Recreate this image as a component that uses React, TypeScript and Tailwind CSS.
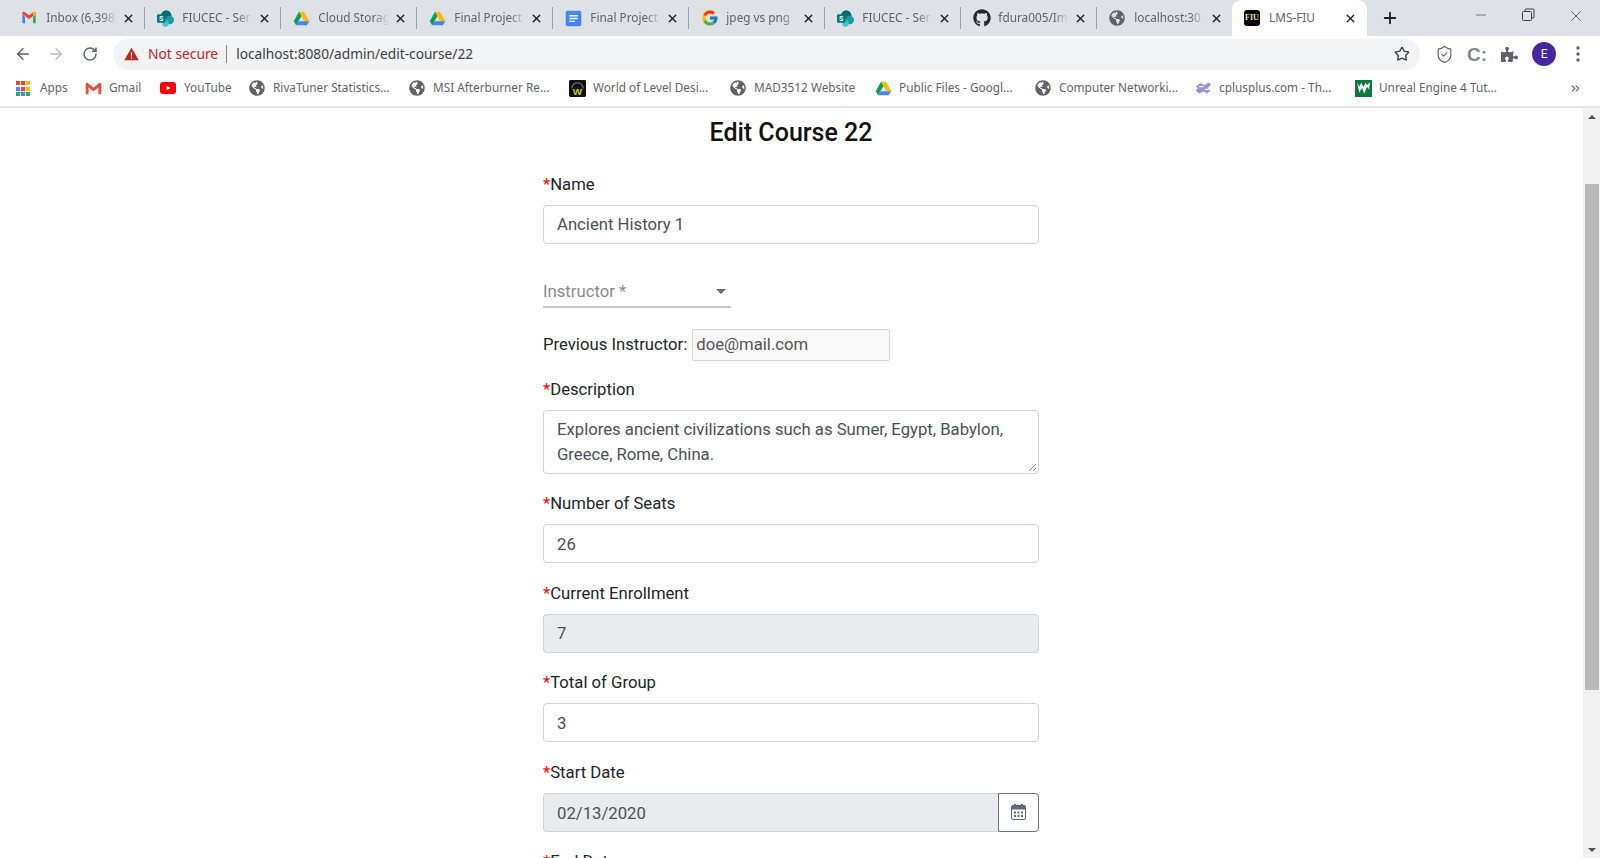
import React from "react";
import { ArrowLeft, ArrowRight, RotateCw, Star, ShieldCheck, X, Plus, Minus, ChevronsRight } from "lucide-react";
import { FaGithub, FaGlobeAmericas, FaPuzzlePiece } from "react-icons/fa";
import { FcGoogle } from "react-icons/fc";

const Gmail = ({ s = 16 }: { s?: number }) => (
  <svg width={s} height={s} viewBox="0 0 24 24">
    <path d="M2 6v14h4V10z" fill="#4285f4" />
    <path d="M22 6v14h-4V10z" fill="#34a853" />
    <path d="M2 6l10 7.500L22 6v-1.500a2 2 0 0 0-3.200-1.600L12 8 5.200 2.900A2 2 0 0 0 2 4.500z" fill="#ea4335" />
    <path d="M18 10l4-4V4.500a2 2 0 0 0-3.200-1.600L18 3.500z" fill="#fbbc04" />
  </svg>
);
const GmailBookmark = () => (
  <svg width={17} height={17} viewBox="0 0 24 24">
    <path d="M3 6h18v14H3z" fill="#f3f3f3" />
    <path d="M1 5v15h4V10.500l7 5.500 7-5.500V20h4V5l-2-1.500L12 11 3 3.500z" fill="#e0503f" />
  </svg>
);
const Drive = ({ s = 17 }: { s?: number }) => (
  <svg width={s} height={s} viewBox="0 0 24 24">
    <path d="M8.500 2.500h7L23 16h-7z" fill="#fbbc04" />
    <path d="M8.500 2.500L1 16l3.500 5.500L12 8.500z" fill="#0f9d58" />
    <path d="M8 16h15l-3.500 5.500h-15z" fill="#4285f4" />
  </svg>
);
const SharePoint = () => (
  <svg width={17} height={17} viewBox="0 0 24 24">
    <circle cx="13" cy="8" r="7.500" fill="#036c70" />
    <circle cx="18" cy="14" r="6" fill="#1a9ba1" />
    <circle cx="12" cy="19" r="4.500" fill="#37c6d0" />
    <rect x="0" y="6" width="12" height="12" rx="1.500" fill="#03787c" />
    <text x="6" y="15.500" textAnchor="middle" fontSize="10" fontWeight="700" fill="#fff" fontFamily="Roboto, sans-serif">S</text>
  </svg>
);
const Docs = () => (
  <svg width={17} height={17} viewBox="0 0 24 24">
    <rect x="1" y="1" width="22" height="22" rx="2.500" fill="#4285f4" />
    <path d="M6 7h12v2H6zM6 11h12v2H6zM6 15h8v2H6z" fill="#fff" />
  </svg>
);
const Fiu = () => (
  <div className="flex h-[16px] w-[16px] items-center justify-center rounded-[3px] bg-black font-['Liberation_Serif',serif] text-[8px] font-bold leading-none text-[#f5e6b0]">FIU</div>
);
const Globe = ({ s = 16 }: { s?: number }) => <FaGlobeAmericas size={s} color="#5f6368" />;
const AppsIcon = () => {
  const colors = ["#ea4335", "#ea4335", "#fbbc04", "#4285f4", "#ea4335", "#fbbc04", "#34a853", "#4285f4", "#34a853"];
  return (
    <div className="grid h-[14px] w-[14px] grid-cols-3 gap-[1.500px]">
      {colors.map((c, i) => (
        <svg key={i} width="4" height="4"><rect width="4" height="4" fill={c} /></svg>
      ))}
    </div>
  );
};
const Warning = () => (
  <svg width={15} height={14} viewBox="0 0 24 22">
    <path d="M12 1L23.500 21H.500z" fill="#c5221f" />
    <path d="M11 8h2v7h-2zM11 16.500h2v2h-2z" fill="#fff" />
  </svg>
);
const WorldIcon = () => (
  <svg width={17} height={17} viewBox="0 0 24 24">
    <rect width="24" height="24" rx="2" fill="#111" />
    <path d="M4 12a8 8 0 0 1 16 0" fill="none" stroke="#777" strokeWidth="1.500" />
    <text x="12" y="21" textAnchor="middle" fontSize="14" fontWeight="700" fill="#c6d410" fontFamily="Liberation Sans, sans-serif">W</text>
  </svg>
);
const CppIcon = () => (
  <svg width={17} height={14} viewBox="0 0 24 20">
    <path d="M1 8l7-5 5 3 7-4 3 3-5 5 4 4-5 4-5-3-6 3-5-4 3-4z" fill="#9a93d8" />
    <path d="M6 8h6M14 12h6" stroke="#fff" strokeWidth="2" />
  </svg>
);
const UnrealIcon = () => (
  <svg width={17} height={17} viewBox="0 0 24 24">
    <rect width="24" height="24" fill="#0c7a3a" />
    <path d="M0 0h5l3 12 4-7 3 9 4-9 5 6V0z" fill="#fff" opacity="0" />
    <path d="M3 3l3 15 4-7 3 8 4-9 3 3 1-10-4 4-2-3-3 6-3-6-3 5z" fill="#fff" />
  </svg>
);
const Calendar = () => (
  <svg width={15} height={16} viewBox="0 0 15 16">
    <path d="M3 0h2v3H3zM10 0h2v3h-2z" fill="#5f6b75" />
    <rect x="0.500" y="1.500" width="14" height="14" rx="1.500" fill="none" stroke="#5f6b75" />
    <rect x="0.500" y="1.500" width="14" height="4" fill="#5f6b75" />
    <path d="M3 7.500h2v2H3zM6.500 7.500h2v2h-2zM10 7.500h2v2h-2zM3 11h2v2H3zM6.500 11h2v2h-2zM10 11h2v2h-2z" fill="#5f6b75" />
  </svg>
);

const tabs = [
  { title: "Inbox (6,398)", icon: <Gmail /> },
  { title: "FIUCEC - Ser", icon: <SharePoint /> },
  { title: "Cloud Storag", icon: <Drive /> },
  { title: "Final Project", icon: <Drive /> },
  { title: "Final Project", icon: <Docs /> },
  { title: "jpeg vs png", icon: <FcGoogle size={18} /> },
  { title: "FIUCEC - Ser", icon: <SharePoint /> },
  { title: "fdura005/Im", icon: <FaGithub size={18} color="#24292e" /> },
  { title: "localhost:30", icon: <Globe /> },
];

const bookmarks = [
  { label: "Apps", icon: <AppsIcon />, w: "w-[69px]" },
  { label: "Gmail", icon: <GmailBookmark />, w: "w-[75px]" },
  { label: "YouTube", icon: <svg width={16} height={12} viewBox="0 0 16 12"><rect width="16" height="12" rx="3" fill="#f00" /><path d="M6.500 3.500v5l4-2.500z" fill="#fff" /></svg>, w: "w-[89px]" },
  { label: "RivaTuner Statistics...", icon: <Globe />, w: "w-[160px]" },
  { label: "MSI Afterburner Re...", icon: <Globe />, w: "w-[160px]" },
  { label: "World of Level Desi...", icon: <WorldIcon />, w: "w-[161px]" },
  { label: "MAD3512 Website", icon: <Globe />, w: "w-[145px]" },
  { label: "Public Files - Googl...", icon: <Drive />, w: "w-[160px]" },
  { label: "Computer Networki...", icon: <Globe />, w: "w-[160px]" },
  { label: "cplusplus.com - Th...", icon: <CppIcon />, w: "w-[160px]" },
  { label: "Unreal Engine 4 Tut...", icon: <UnrealIcon />, w: "w-[160px]" },
];

const Label = ({ text, gap = "mb-[8px]" }: { text: string; gap?: string }) => (
  <div className={`${gap} h-[24px] text-[16.700px] leading-[24px] text-[#212529]`}>
    <span className="text-[#ff0000]">*</span>
    {text}
  </div>
);

const Field = ({ label, value, disabled }: { label: string; value: string; disabled?: boolean }) => (
  <div className="mb-[18.500px]">
    <Label text={label} />
    <div className={`flex h-[39px] items-center rounded-[4px] border border-[#ced4da] px-[13px] pt-[2px] text-[16.700px] text-[#495057] ${disabled ? "bg-[#e9ecef]" : "bg-white"}`}>
      {value}
    </div>
  </div>
);

export default function App() {
  return (
    <div className="flex h-[858px] w-[1600px] flex-col overflow-hidden bg-white font-['Roboto',sans-serif]">
      {/* Tab strip */}
      <div className="flex h-[36px] shrink-0 items-stretch bg-[#dee1e6] pl-[9px] font-['Noto_Sans',sans-serif] text-[11.800px] text-[#5f6368]">
        {tabs.map((t, i) => (
          <div key={i} className="flex h-[36px] w-[136px] shrink-0 items-center justify-between pl-[12px]">
            <div className="flex w-[25px] shrink-0 items-center">{t.icon}</div>
            <div className="w-[71px] overflow-hidden whitespace-nowrap [mask-image:linear-gradient(to_right,black_78%,transparent)]">{t.title}</div>
            <X size={13} strokeWidth={2.600} className="ml-[4px] shrink-0 text-[#202124]" />
            <div className="ml-[9px] h-[22px] w-px shrink-0 bg-[#9aa0a6]" />
          </div>
        ))}
        <div className="-ml-[1px] flex h-[36px] w-[135px] shrink-0 items-center rounded-t-[9px] bg-white pl-[12px] pr-[10px]">
          <div className="flex w-[25px] shrink-0 items-center"><Fiu /></div>
          <div className="flex-1 whitespace-nowrap text-[#5f6368]">LMS-FIU</div>
          <X size={13} strokeWidth={2.600} className="text-[#202124]" />
        </div>
        <div className="ml-[14px] flex items-center"><Plus size={18} strokeWidth={2.400} className="text-[#202124]" /></div>
        <div className="ml-[74px] flex items-start pt-[7px] text-[#3c4043]">
          <Minus size={16} strokeWidth={1} />
          <svg width="16" height="16" viewBox="0 0 16 16" className="ml-[31px]" fill="none" stroke="#3c4043"><rect x="2.500" y="4.500" width="9" height="9" rx="1" /><path d="M5 4.500V3a1 1 0 0 1 1-1h7a1 1 0 0 1 1 1v7a1 1 0 0 1-1 1h-1.500" /></svg>
          <X size={18} strokeWidth={1} className="ml-[31px]" />
        </div>
      </div>

      {/* Toolbar */}
      <div className="flex h-[36px] shrink-0 items-center bg-white">
        <div className="flex w-[113px] shrink-0 items-center pl-[14px]">
          <ArrowLeft size={18} className="text-[#5f6368]" />
          <ArrowRight size={18} className="ml-[15px] text-[#bdc1c6]" />
          <RotateCw size={16} strokeWidth={2.200} className="ml-[17px] text-[#5f6368]" />
        </div>
        <div className="flex h-[31px] w-[1307px] shrink-0 items-center rounded-full bg-[#f1f3f4] pl-[11px] pr-[10px]">
          <Warning />
          <span className="ml-[9px] font-['Noto_Sans',sans-serif] text-[13.800px] text-[#c5221f]">Not secure</span>
          <div className="ml-[8px] h-[18px] w-px bg-[#80868b]" />
          <span className="ml-[9px] flex-1 font-['Noto_Sans',sans-serif] text-[13.700px] text-[#3c4043]">localhost:8080/admin/edit-course/22</span>
          <Star size={16} strokeWidth={2} className="text-[#3c4043]" />
        </div>
        <ShieldCheck size={19} strokeWidth={1.500} className="ml-[15px] text-[#5f6368]" />
        <span className="ml-[13px] font-['Liberation_Sans',sans-serif] text-[19px] font-bold leading-none text-[#80868b]">C:</span>
        <FaPuzzlePiece size={17} color="#5f6368" className="ml-[14px]" />
        <div className="ml-[14px] flex h-[24px] w-[24px] items-center justify-center rounded-full bg-[#4527a0] text-[12px] text-white">E</div>
        <svg width="4" height="16" viewBox="0 0 4 16" className="ml-[20px]"><circle cx="2" cy="2" r="1.700" fill="#5f6368" /><circle cx="2" cy="8" r="1.700" fill="#5f6368" /><circle cx="2" cy="14" r="1.700" fill="#5f6368" /></svg>
      </div>

      {/* Bookmarks */}
      <div className="flex h-[36px] shrink-0 items-center border-b-2 border-b-[#e3e4e6] bg-white pb-[2px] pl-[16px] font-['Noto_Sans',sans-serif] text-[11.800px] text-[#5f6368]">
        {bookmarks.map((b, i) => (
          <div key={i} className={`flex shrink-0 items-center whitespace-nowrap ${b.w}`}>
            <div className="flex w-[24px] shrink-0 items-center">{b.icon}</div>
            <span>{b.label}</span>
          </div>
        ))}
        <ChevronsRight size={13} className="ml-[54px] text-[#5f6368]" />
      </div>

      {/* Page */}
      <div className="flex min-h-0 flex-1 overflow-hidden">
        <main className="min-w-0 flex-1 overflow-hidden">
          <div className="ml-[543px] w-[496px] pt-[9px]">
            <h1 className="mb-[24px] text-center text-[25px] font-medium leading-[32px] text-[#111]">Edit Course 22</h1>

            <div className="mb-[30px]">
              <Label text="Name" />
              <div className="flex h-[39px] items-center rounded-[4px] border border-[#ced4da] bg-white px-[13px] text-[16.700px] text-[#495057]">Ancient History 1</div>
            </div>

            <div className="flex h-[34px] w-[188px] items-end justify-between border-b-2 border-b-[#c8c8c8] pb-[2px] pr-[5px] text-[16.700px] leading-[24px] text-[#8a8a8a]">
              <span>Instructor *</span>
              <svg width="10" height="5" viewBox="0 0 10 5" className="mb-[10px]"><path d="M0 0h10L5 5z" fill="#6b6b6b" /></svg>
            </div>

            <div className="mb-[18px] mt-[20px] flex h-[32px] items-center pt-[1px] text-[16.700px] text-[#212529]">
              <span>Previous Instructor:</span>
              <div className="ml-[5px] flex h-[32px] w-[198px] items-center rounded-[2px] border border-[#d5d5d5] bg-[#f8f8f8] px-[3px] text-[#555]">doe@mail.com</div>
            </div>

            <div className="mb-[18px]">
              <Label text="Description" />
              <div className="relative h-[64px] rounded-[4px] border border-[#ced4da] bg-white px-[13px] pt-[6px] text-[16.700px] leading-[25px] text-[#495057]">
                Explores ancient civilizations such as Sumer, Egypt, Babylon,
                <br />
                Greece, Rome, China.
                <svg width="9" height="9" viewBox="0 0 9 9" className="absolute bottom-[1px] right-[1px]"><path d="M1 8l7-7M5 8l3-3" stroke="#777" strokeWidth="0.800" /></svg>
              </div>
            </div>

            <Field label="Number of Seats" value="26" />
            <Field label="Current Enrollment" value="7" disabled />
            <Field label="Total of Group" value="3" />

            <div className="mb-[18px]">
              <Label text="Start Date" />
              <div className="flex h-[39px] text-[16.700px] text-[#495057]">
                <div className="flex flex-1 items-center rounded-l-[4px] border border-r-0 border-[#ced4da] bg-[#e9ecef] px-[13px] pt-[3px]">02/13/2020</div>
                <div className="flex w-[41px] items-center justify-center rounded-r-[4px] border border-[#6c757d] bg-white">
                  <Calendar />
                </div>
              </div>
            </div>

            <Label text="End Date" />
          </div>
        </main>
        <div className="flex w-[17px] shrink-0 flex-col items-center bg-[#f1f1f1] pb-[6px] pt-[7px]">
          <svg width="8" height="4" viewBox="0 0 8 4"><path d="M0 4h8L4 0z" fill="#505050" /></svg>
          <div className="mt-[65px] h-[506px] w-[14px] bg-[#b9b9b9]" />
          <svg width="8" height="4" viewBox="0 0 8 4" className="mt-auto"><path d="M0 0h8L4 4z" fill="#505050" /></svg>
        </div>
      </div>
    </div>
  );
}
